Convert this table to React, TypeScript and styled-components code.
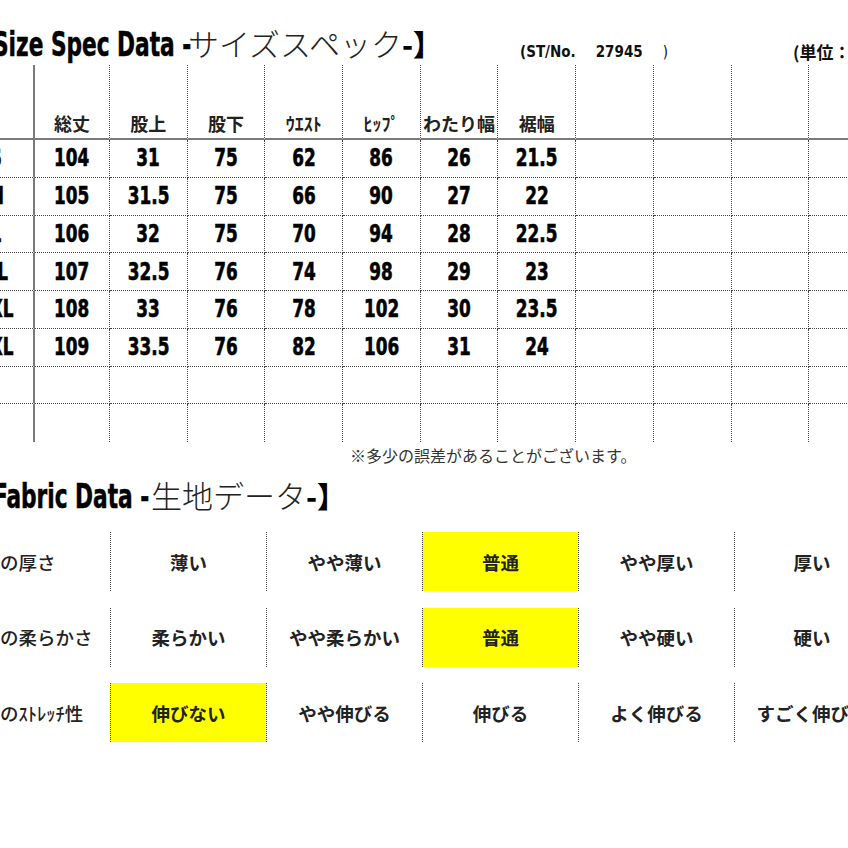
import styled, { createGlobalStyle } from 'styled-components';

const CONDENSED = `"Liberation Sans Narrow", "DejaVu Sans Condensed", "Liberation Sans", "Noto Sans CJK JP", sans-serif`;
const JP = `"Noto Sans CJK JP", "Noto Sans", sans-serif`;
const DOT = '1px dotted #444';
const SOLID = '2px solid #7a7a7a';

const SIZE_HEADERS = ['総丈', '股上', '股下', 'ｳｴｽﾄ', 'ﾋｯﾌﾟ', 'わたり幅', '裾幅'];
const DATA_COLS = 11;

const SIZE_ROWS = [
  { size: 'S', values: ['104', '31', '75', '62', '86', '26', '21.5'] },
  { size: 'M', values: ['105', '31.5', '75', '66', '90', '27', '22'] },
  { size: 'L', values: ['106', '32', '75', '70', '94', '28', '22.5'] },
  { size: 'XL', values: ['107', '32.5', '76', '74', '98', '29', '23'] },
  { size: '2XL', values: ['108', '33', '76', '78', '102', '30', '23.5'] },
  { size: '3XL', values: ['109', '33.5', '76', '82', '106', '31', '24'] },
  { size: '', values: [] as string[] },
  { size: '', values: [] as string[] },
];

const FABRIC_ROWS = [
  { label: '生地の厚さ', options: ['薄い', 'やや薄い', '普通', 'やや厚い', '厚い'], selected: 2 },
  { label: '生地の柔らかさ', options: ['柔らかい', 'やや柔らかい', '普通', 'やや硬い', '硬い'], selected: 2 },
  { label: '生地のｽﾄﾚｯﾁ性', options: ['伸びない', 'やや伸びる', '伸びる', 'よく伸びる', 'すごく伸びる'], selected: 0 },
];

const App = () => {
  const lastRow = SIZE_ROWS.length - 1;

  return (
    <Page>
      <GlobalStyle />
      <Sheet>
        <SpecHeader>
          <Title>
            <Eng $width={195}>
              <Squeeze>Size Spec Data -</Squeeze>
            </Eng>
            <Kana>サイズスペック</Kana>
            <Bracket>-】</Bracket>
          </Title>
          <StyleNo>
            (ST/No.<em>27945</em>
            <i>)</i>
          </StyleNo>
          <Unit>(単位：cm)</Unit>
        </SpecHeader>

        <SizeGrid>
          <Cell $head $label />
          {Array.from({ length: DATA_COLS }).map((_, i) => (
            <Cell key={`h${i}`} $head>
              {SIZE_HEADERS[i] ?? ''}
            </Cell>
          ))}

          {SIZE_ROWS.map((row, r) => (
            <Row key={r}>
              <Cell $label $last={r === lastRow}>
                {row.size && <Num>{row.size}</Num>}
              </Cell>
              {Array.from({ length: DATA_COLS }).map((_, i) => (
                <Cell key={i} $last={r === lastRow}>
                  {row.values[i] && <Num>{row.values[i]}</Num>}
                </Cell>
              ))}
            </Row>
          ))}
        </SizeGrid>

        <Note>※多少の誤差があることがございます。</Note>

        <Title $fabric>
          <Eng $width={158}>
            <Squeeze>Fabric Data -</Squeeze>
          </Eng>
          <Kana>生地データ</Kana>
          <Bracket>-】</Bracket>
        </Title>

        <FabricGrid>
          {FABRIC_ROWS.map(row => (
            <Row key={row.label}>
              <FabricLabel>{row.label}</FabricLabel>
              {row.options.map((opt, i) => (
                <Option key={opt} $on={i === row.selected} $end={i === row.options.length - 1}>
                  {opt}
                </Option>
              ))}
            </Row>
          ))}
        </FabricGrid>
      </Sheet>
    </Page>
  );
};

export default App;

const GlobalStyle = createGlobalStyle`
  html, body {
    margin: 0;
    padding: 0;
    background: #fff;
  }
  body {
    font-family: ${JP};
    color: #111;
  }
`;

const Page = styled.div`
  width: 848px;
  height: 848px;
  overflow: hidden;
  background: #fff;
`;

const Sheet = styled.div`
  margin-left: -41px;
  width: 960px;
  padding-top: 26px;
`;

const SpecHeader = styled.div`
  display: flex;
  align-items: flex-end;
  height: 39px;
`;

const Title = styled.div<{ $fabric?: boolean }>`
  flex: 0 0 527px;
  display: flex;
  align-items: baseline;
  padding-left: 34px;
  padding-bottom: ${p => (p.$fabric ? '0' : '2px')};
  white-space: nowrap;
  margin-top: ${p => (p.$fabric ? '12px' : '0')};
  height: ${p => (p.$fabric ? '36px' : 'auto')};
`;

const Eng = styled.div<{ $width: number }>`
  flex: 0 0 ${p => p.$width}px;
  width: ${p => p.$width}px;
  min-width: 0;
  font-family: ${CONDENSED};
  font-weight: 700;
  font-size: 33px;
  line-height: 36px;
  color: #000;
  -webkit-text-stroke: 0.5px #000;
`;

const Squeeze = styled.span`
  display: inline-block;
  transform: scaleX(0.73);
  transform-origin: left center;
`;

const Kana = styled.span`
  font-family: ${JP};
  font-weight: 300;
  font-size: 31px;
  line-height: 36px;
  color: #222;
`;

const Bracket = styled.span`
  font-family: ${JP};
  font-weight: 900;
  font-size: 29px;
  line-height: 36px;
  color: #000;
`;

const StyleNo = styled.div`
  flex: 0 0 273px;
  padding-bottom: 3px;
  font-family: ${CONDENSED};
  font-weight: 700;
  font-size: 15px;
  line-height: 20px;
  color: #111;
  white-space: nowrap;

  em {
    font-style: normal;
    margin-left: 20px;
  }

  i {
    font-style: normal;
    font-weight: 400;
    margin-left: 20px;
  }
`;

const Unit = styled.div`
  padding-bottom: 3px;
  font-family: ${JP};
  font-weight: 700;
  font-size: 17px;
  line-height: 20px;
  white-space: nowrap;
`;

const SizeGrid = styled.div`
  display: grid;
  grid-template-columns: 76px 75px repeat(10, 77.7px);
  grid-template-rows: 75px repeat(8, 37.75px);
`;

const Row = styled.div`
  display: contents;
`;

const Cell = styled.div<{ $head?: boolean; $label?: boolean; $last?: boolean }>`
  display: flex;
  justify-content: center;
  align-items: ${p => (p.$head ? 'flex-end' : 'center')};
  padding-bottom: ${p => (p.$head ? '6px' : '0')};
  box-sizing: border-box;
  border-right: ${p => (p.$label ? SOLID : DOT)};
  border-bottom: ${p => (p.$head ? SOLID : p.$last ? 'none' : DOT)};
  font-family: ${p => (p.$head ? JP : CONDENSED)};
  font-weight: 700;
  font-size: ${p => (p.$head ? '18px' : '24px')};
  line-height: 1;
  color: ${p => (p.$head ? '#222' : '#000')};
  white-space: nowrap;
`;

const Num = styled.span`
  display: inline-block;
  transform: scaleX(0.78);
  -webkit-text-stroke: 0.6px #000;
`;

const Note = styled.div`
  padding-left: 391px;
  margin-top: 3px;
  font-family: ${JP};
  font-size: 16px;
  line-height: 20px;
  color: #333;
  white-space: nowrap;
`;

const FabricGrid = styled.div`
  display: grid;
  grid-template-columns: 151px repeat(5, 156px);
  grid-auto-rows: 59px;
  row-gap: 16.5px;
  margin-top: 19px;
`;

const FabricLabel = styled.div`
  display: flex;
  align-items: center;
  padding-left: 4px;
  font-family: ${JP};
  font-weight: 500;
  font-size: 18.5px;
  color: #222;
  white-space: nowrap;
`;

const Option = styled.div<{ $on?: boolean; $end?: boolean }>`
  display: flex;
  justify-content: center;
  align-items: center;
  box-sizing: border-box;
  border-left: ${DOT};
  border-right: ${p => (p.$end ? DOT : 'none')};
  background: ${p => (p.$on ? '#ffff00' : 'transparent')};
  font-family: ${JP};
  font-weight: 700;
  font-size: 18.5px;
  color: #222;
  white-space: nowrap;
`;
